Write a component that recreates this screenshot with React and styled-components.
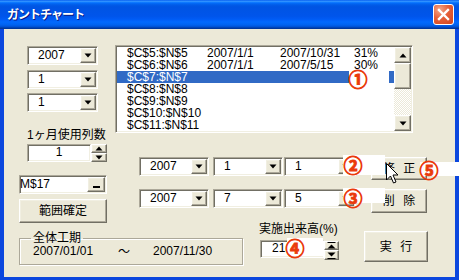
import React from 'react';
import styled, { createGlobalStyle } from 'styled-components';

const LIST_ROWS = [
  { range: '$C$5:$N$5', start: '2007/1/1', end: '2007/10/31', rate: '31%' },
  { range: '$C$6:$N$6', start: '2007/1/1', end: '2007/5/15', rate: '30%' },
  { range: '$C$7:$N$7', selected: true },
  { range: '$C$8:$N$8' },
  { range: '$C$9:$N$9' },
  { range: '$C$10:$N$10' },
  { range: '$C$11:$N$11' },
];

const MARKS = [
  { box: [349, 70, 40, 13], at: [358, 78], text: '①' },
  { box: [343, 155, 42, 20], at: [353, 164], text: '②' },
  { box: [343, 188, 42, 15], at: [353, 197], text: '③' },
  { box: [287, 238, 36, 18], at: [295, 247], text: '④' },
  { box: [420, 162, 39, 14], at: [429, 169], text: '⑤' },
];

function Arrow() {
  return (
    <svg width="8" height="5" viewBox="0 0 8 5">
      <polygon points="0.5,0.5 7.5,0.5 4,4.5" fill="#000" />
    </svg>
  );
}

function ArrowUp() {
  return (
    <svg width="8" height="5" viewBox="0 0 8 5">
      <polygon points="0.5,4.5 7.5,4.5 4,0.5" fill="#000" />
    </svg>
  );
}

function Combo({ value, width }) {
  return (
    <ComboBox $w={width}>
      <ComboText>{value}</ComboText>
      <DropButton>
        <Arrow />
      </DropButton>
    </ComboBox>
  );
}

function App() {
  return (
    <>
      <GlobalStyle />
      <Window>
        <TitleBar>
          <Title>ガントチャート</Title>
          <CloseButton>
            <svg width="13" height="13" viewBox="0 0 13 13">
              <path
                d="M2 2 L11 11 M11 2 L2 11"
                stroke="#fff"
                strokeWidth="2.4"
                strokeLinecap="square"
              />
            </svg>
          </CloseButton>
        </TitleBar>

        <Body>
          <MainRow>
            <LeftCol>
              <ComboStack>
                <Combo value="2007" width={71} />
                <Combo value="1" width={71} />
                <Combo value="1" width={71} />
              </ComboStack>
              <FieldLabel>1ヶ月使用列数</FieldLabel>
              <Spinner>
                <SpinInput>1</SpinInput>
                <SpinButtons>
                  <SpinButton>
                    <ArrowUp />
                  </SpinButton>
                  <SpinButton>
                    <Arrow />
                  </SpinButton>
                </SpinButtons>
              </Spinner>
              <RefField>
                <RefText>M$17</RefText>
                <RefButton>
                  <RefBar />
                </RefButton>
              </RefField>
              <WideButton>範囲確定</WideButton>
            </LeftCol>

            <RightCol>
              <ListBox>
                <ListRows>
                  {LIST_ROWS.map((row, idx) => (
                    <ListRow key={idx} $selected={row.selected}>
                      <span>{row.range}</span>
                      <span>{row.start}</span>
                      <span>{row.end}</span>
                      <span>{row.rate}</span>
                    </ListRow>
                  ))}
                </ListRows>
                <ScrollBar>
                  <ScrollButton>
                    <ArrowUp />
                  </ScrollButton>
                  <ScrollThumb />
                  <ScrollTrack />
                  <ScrollButton>
                    <Arrow />
                  </ScrollButton>
                </ScrollBar>
              </ListBox>

              <EditRow $top={24}>
                <Combo value="2007" width={70} />
                <ComboGap $w={4} />
                <Combo value="1" width={70} />
                <ComboGap $w={1} />
                <Combo value="1" width={72} />
                <SideButton $h={23}>修 正</SideButton>
              </EditRow>
              <EditRow $top={9}>
                <Combo value="2007" width={70} />
                <ComboGap $w={4} />
                <Combo value="7" width={70} />
                <ComboGap $w={1} />
                <Combo value="5" width={72} />
                <SideButton $h={24}>削 除</SideButton>
              </EditRow>
            </RightCol>
          </MainRow>

          <BottomRow>
            <GroupBox>
              <GroupLegend>全体工期</GroupLegend>
              <PeriodLine>
                <span>2007/01/01</span>
                <Tilde>～</Tilde>
                <span>2007/11/30</span>
              </PeriodLine>
            </GroupBox>

            <ExecArea>
              <ExecLabel>実施出来高(%)</ExecLabel>
              <ExecSpinner>
                <ExecInput>21</ExecInput>
                <ExecSpinButtons>
                  <ExecSpinButton $h={9}>
                    <svg width="9" height="7" viewBox="0 0 9 7">
                      <rect x="0.5" y="0" width="8" height="1" fill="#000" />
                      <polygon points="0.5,6.5 8.5,6.5 4.5,2.5" fill="#000" />
                    </svg>
                  </ExecSpinButton>
                  <ExecSpinButton $h={10}>
                    <svg width="9" height="7" viewBox="0 0 9 7">
                      <polygon points="0.5,0.5 8.5,0.5 4.5,4.5" fill="#000" />
                      <rect x="0.5" y="6" width="8" height="1" fill="#000" />
                    </svg>
                  </ExecSpinButton>
                </ExecSpinButtons>
              </ExecSpinner>
            </ExecArea>

            <ExecButton>実 行</ExecButton>
          </BottomRow>
        </Body>

        {MARKS.map(m => (
          <React.Fragment key={m.text}>
            <NoteBox $x={m.box[0]} $y={m.box[1]} $w={m.box[2]} $h={m.box[3]} />
            <NoteMark $x={m.at[0]} $y={m.at[1]}>
              {m.text}
            </NoteMark>
          </React.Fragment>
        ))}

        <Cursor width="14" height="23" viewBox="0 0 14 23">
          <path
            d="M1.5 1.5 L1.5 18 L5.5 14 L8.5 21 L11 20 L8 13 L13 13 Z"
            fill="#fff"
            stroke="#000"
            strokeWidth="1"
            strokeLinejoin="miter"
          />
        </Cursor>
      </Window>
    </>
  );
}

export default App;

const GlobalStyle = createGlobalStyle`
  html, body {
    margin: 0;
    padding: 0;
    background: #fff;
  }
  body {
    font-family: "Liberation Sans", "Noto Sans CJK JP", sans-serif;
    font-size: 12px;
    color: #000;
  }
  * {
    box-sizing: border-box;
  }
`;

const raised = `
  background: #ece9d8;
  border: 1px solid;
  border-color: #fff #716f64 #716f64 #fff;
  box-shadow: inset -1px -1px #aca899, inset 1px 1px #f1efe2;
`;

const sunken = `
  background: #fff;
  border: 1px solid;
  border-color: #aca899 #fff #fff #aca899;
  box-shadow: inset 1px 1px #716f64, inset -1px -1px #f1efe2;
`;

const Window = styled.div`
  position: relative;
  width: 459px;
  height: 280px;
  display: flex;
  flex-direction: column;
  background: #0b47de;
  overflow: hidden;
`;

const TitleBar = styled.div`
  height: 29px;
  display: flex;
  align-items: center;
  padding: 0 5px 0 7px;
  background: linear-gradient(
    to bottom,
    #0058ee 0%,
    #3593ff 4%,
    #288eff 6%,
    #127dff 8%,
    #036ffc 10%,
    #0262ee 14%,
    #0057e5 20%,
    #0054e3 24%,
    #0055eb 56%,
    #005bf5 66%,
    #026afe 76%,
    #0062ef 86%,
    #0052d6 92%,
    #0040ab 96%,
    #003092 100%
  );
`;

const Title = styled.div`
  flex: 1;
  color: #fff;
  font-weight: bold;
  font-size: 12px;
  letter-spacing: -1px;
  line-height: 14px;
  text-shadow: 1px 1px #0a1883;
`;

const CloseButton = styled.div`
  width: 21px;
  height: 21px;
  display: flex;
  align-items: center;
  justify-content: center;
  border: 1px solid #fff;
  border-radius: 3px;
  background: radial-gradient(
    circle at 30% 25%,
    #f3a789 0%,
    #e5603a 45%,
    #d2441c 100%
  );
`;

const Body = styled.div`
  flex: 1;
  margin: 0 4px 3px;
  padding: 16px 0 0 15px;
  background: #ece9d8;
`;

const MainRow = styled.div`
  display: flex;
  align-items: flex-start;
`;

const LeftCol = styled.div`
  width: 88px;
  display: flex;
  flex-direction: column;
  padding-top: 1px;
`;

const ComboStack = styled.div`
  display: flex;
  flex-direction: column;
  gap: 4.5px;
  margin-left: 8px;
`;

const ComboBox = styled.div`
  ${sunken};
  display: flex;
  align-items: center;
  width: ${p => p.$w}px;
  height: 19px;
  padding: 1px;
  flex: none;
`;

const ComboText = styled.span`
  flex: 1;
  padding-left: 9px;
  line-height: 13px;
  white-space: nowrap;
`;

const DropButton = styled.div`
  ${raised};
  width: 16px;
  height: 15px;
  display: flex;
  align-items: center;
  justify-content: center;
`;

const ComboGap = styled.div`
  width: ${p => p.$w}px;
  flex: none;
`;

const FieldLabel = styled.div`
  margin: 17px 0 0 8px;
  line-height: 12px;
  white-space: nowrap;
`;

const Spinner = styled.div`
  display: flex;
  margin: 3px 0 0 8px;
  height: 18px;
`;

const SpinInput = styled.div`
  ${sunken};
  width: 64px;
  height: 18px;
  text-align: center;
  line-height: 15px;
`;

const SpinButtons = styled.div`
  display: flex;
  flex-direction: column;
  width: 16px;
`;

const SpinButton = styled.div`
  ${raised};
  height: 9px;
  display: flex;
  align-items: center;
  justify-content: center;
`;

const RefField = styled.div`
  ${sunken};
  margin-top: 13px;
  width: 88px;
  height: 19px;
  display: flex;
  align-items: center;
  padding: 1px;
`;

const RefText = styled.span`
  flex: 1;
  line-height: 13px;
  margin-left: -1px;
`;

const RefButton = styled.div`
  ${raised};
  width: 18px;
  height: 15px;
  display: flex;
  align-items: flex-end;
  justify-content: center;
  padding-bottom: 3px;
`;

const RefBar = styled.div`
  width: 7px;
  height: 2px;
  background: #000;
`;

const WideButton = styled.div`
  ${raised};
  margin-top: 5px;
  width: 88px;
  height: 24px;
  display: flex;
  align-items: center;
  justify-content: center;
  line-height: 14px;
`;

const RightCol = styled.div`
  margin-left: 8px;
  width: 312px;
  display: flex;
  flex-direction: column;
`;

const ListBox = styled.div`
  ${sunken};
  width: 298px;
  height: 88px;
  display: flex;
  padding: 1px;
`;

const ListRows = styled.div`
  flex: 1;
  display: flex;
  flex-direction: column;
`;

const ListRow = styled.div`
  height: 12px;
  line-height: 12px;
  display: grid;
  grid-template-columns: 80px 73px 74px 1fr;
  padding-left: 10px;
  white-space: nowrap;
  background: ${p => (p.$selected ? '#316ac5' : 'transparent')};
  color: ${p => (p.$selected ? '#fff' : '#000')};
`;

const ScrollBar = styled.div`
  width: 17px;
  display: flex;
  flex-direction: column;
`;

const ScrollButton = styled.div`
  ${raised};
  height: 16px;
  display: flex;
  align-items: center;
  justify-content: center;
`;

const ScrollThumb = styled.div`
  ${raised};
  height: 26px;
`;

const ScrollTrack = styled.div`
  flex: 1;
  background-color: #ece9d8;
  background-image: repeating-conic-gradient(#fff 0 25%, #ece9d8 0 50%);
  background-size: 2px 2px;
`;

const EditRow = styled.div`
  display: flex;
  align-items: flex-start;
  margin-top: ${p => p.$top}px;
  padding-left: 24px;
`;

const SideButton = styled.div`
  ${raised};
  margin-left: auto;
  width: 56px;
  height: ${p => p.$h}px;
  display: flex;
  align-items: center;
  justify-content: center;
  word-spacing: 5px;
  line-height: 14px;
`;

const BottomRow = styled.div`
  display: flex;
  align-items: flex-start;
`;

const GroupBox = styled.fieldset`
  margin: 9px 0 0 0;
  padding: 0;
  width: 224px;
  height: 33px;
  min-width: 0;
  border: 1px solid #aca899;
  box-shadow: 1px 1px 0 #fff, inset 1px 1px 0 #fff;
`;

const GroupLegend = styled.legend`
  margin-left: 11px;
  padding: 0 2px;
  line-height: 12px;
  font-size: 12px;
`;

const PeriodLine = styled.div`
  display: grid;
  grid-template-columns: 85px 35px auto;
  margin: 1px 0 0 13px;
  line-height: 12px;
  white-space: nowrap;
`;

const Tilde = styled.span`
  font-family: "Noto Sans CJK JP", sans-serif;
`;

const ExecArea = styled.div`
  margin-left: 16px;
  width: 84px;
  display: flex;
  flex-direction: column;
`;

const ExecLabel = styled.div`
  line-height: 12px;
  white-space: nowrap;
`;

const ExecSpinner = styled.div`
  display: flex;
  margin: 5px 0 0 1px;
  height: 20px;
`;

const ExecInput = styled.div`
  ${sunken};
  width: 64px;
  height: 18px;
  padding-left: 11px;
  line-height: 15px;
`;

const ExecSpinButtons = styled.div`
  display: flex;
  flex-direction: column;
  width: 15px;
  margin-top: 1px;
`;

const ExecSpinButton = styled.div`
  ${raised};
  height: ${p => p.$h}px;
  display: flex;
  align-items: center;
  justify-content: center;
`;

const ExecButton = styled.div`
  ${raised};
  margin: 8px 0 0 21px;
  width: 64px;
  height: 31px;
  display: flex;
  align-items: center;
  justify-content: center;
  word-spacing: 5px;
  line-height: 14px;
`;

const NoteBox = styled.div`
  position: absolute;
  left: ${p => p.$x}px;
  top: ${p => p.$y}px;
  width: ${p => p.$w}px;
  height: ${p => p.$h}px;
  background: #fff;
`;

const NoteMark = styled.div`
  position: absolute;
  left: ${p => p.$x}px;
  top: ${p => p.$y}px;
  transform: translate(-50%, -50%);
  font-family: "Noto Sans CJK JP", sans-serif;
  font-size: 19px;
  font-weight: bold;
  line-height: 19px;
  color: #ea3a0c;
  -webkit-text-stroke: 0.9px #ea3a0c;
`;

const Cursor = styled.svg`
  position: absolute;
  left: 385px;
  top: 162px;
`;
